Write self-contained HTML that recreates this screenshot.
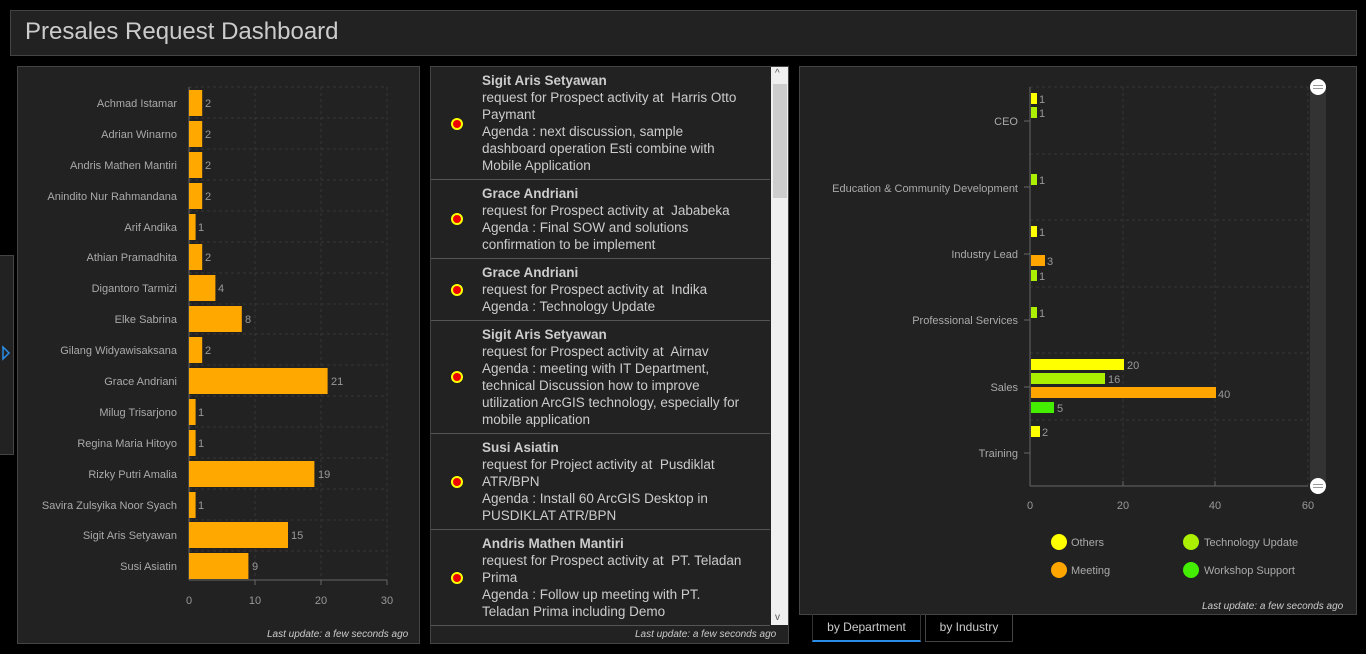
<!DOCTYPE html>
<html><head><meta charset="utf-8"><style>
*{margin:0;padding:0;box-sizing:border-box}
body{width:1366px;height:654px;background:#000;overflow:hidden;font-family:"Liberation Sans",sans-serif;position:relative;color:#bbb}
.abs{position:absolute}
.panel{position:absolute;background:#222;border:1px solid #444}
.upd{position:absolute;font-size:10px;font-style:italic;color:#ccc}
.item{position:absolute;left:1px;width:339px;border-bottom:1px solid #555}
.item .t{position:absolute;left:51px;top:5px;width:264px;font-size:13.5px;line-height:17px;color:#ccc}
.item .t b{color:#ccc}
.dot{position:absolute;left:20px;width:12px;height:12px;border-radius:50%;background:#e00;border:2px solid #ff0}
.tab{position:absolute;top:614px;height:28px;font-size:12px;color:#ccc;text-align:center;line-height:27px}
svg text{font-family:"Liberation Sans",sans-serif}
</style></head><body>
<div class="panel" style="left:10px;top:10px;width:1347px;height:46px"></div>
<div class="abs" style="left:25px;top:18px;font-size:24px;color:#ccc">Presales Request Dashboard</div>

<div class="panel" style="left:0;top:255px;width:14px;height:200px;border-left:none"></div>

<div class="panel" style="left:17px;top:66px;width:403px;height:578px"></div>
<div class="upd" style="left:267px;top:629px">Last update: a few seconds ago</div>

<div class="panel" style="left:430px;top:66px;width:359px;height:578px"></div>
<div class="abs" style="left:771px;top:67px;width:17px;height:558px;background:#f0f0f0"></div>
<div class="abs" style="left:773px;top:84px;width:14px;height:114px;background:#cdcdcd"></div>
<div class="abs" style="left:775px;top:68px;font-size:10px;color:#555">^</div>
<div class="abs" style="left:775px;top:612px;font-size:10px;color:#555">v</div>
<div class="upd" style="left:635px;top:629px">Last update: a few seconds ago</div>

<div class="abs" style="left:430px;top:66px;width:341px;height:560px;overflow:hidden">
 <div class="item" style="top:1px;height:113px"><div class="dot" style="top:51px"></div><div class="t"><b>Sigit Aris Setyawan</b><br>request for Prospect activity at&nbsp; Harris Otto Paymant<br>Agenda : next discussion, sample dashboard operation Esti combine with Mobile Application</div></div>
 <div class="item" style="top:114px;height:79px"><div class="dot" style="top:33px"></div><div class="t"><b>Grace Andriani</b><br>request for Prospect activity at&nbsp; Jababeka<br>Agenda : Final SOW and solutions confirmation to be implement</div></div>
 <div class="item" style="top:193px;height:62px"><div class="dot" style="top:25px"></div><div class="t"><b>Grace Andriani</b><br>request for Prospect activity at&nbsp; Indika<br>Agenda : Technology Update</div></div>
 <div class="item" style="top:255px;height:113px"><div class="dot" style="top:50px"></div><div class="t"><b>Sigit Aris Setyawan</b><br>request for Prospect activity at&nbsp; Airnav<br>Agenda : meeting with IT Department, technical Discussion how to improve utilization ArcGIS technology, especially for mobile application</div></div>
 <div class="item" style="top:368px;height:96px"><div class="dot" style="top:42px"></div><div class="t"><b>Susi Asiatin</b><br>request for Project activity at&nbsp; Pusdiklat ATR/BPN<br>Agenda : Install 60 ArcGIS Desktop in PUSDIKLAT ATR/BPN</div></div>
 <div class="item" style="top:464px;height:96px"><div class="dot" style="top:42px"></div><div class="t"><b>Andris Mathen Mantiri</b><br>request for Prospect activity at&nbsp; PT. Teladan Prima<br>Agenda : Follow up meeting with PT. Teladan Prima including Demo</div></div>
</div>

<div class="panel" style="left:799px;top:66px;width:558px;height:549px"></div>
<div class="upd" style="left:1202px;top:601px">Last update: a few seconds ago</div>

<div class="tab" style="left:812px;width:109px;border-bottom:2px solid #2a8ee8;border-left:1px solid #333;border-right:1px solid #333">by Department</div>
<div class="tab" style="left:925px;width:88px;border:1px solid #444;border-top:none">by Industry</div>

<svg class="abs" style="left:0;top:0" width="1366" height="654">
<path d="M3 347 L9 353 L3 359 Z" fill="none" stroke="#2a8ee8" stroke-width="1.5"/>
<g stroke="#353535" stroke-dasharray="3,3" stroke-width="1">
<line x1="255" y1="87" x2="255" y2="580"/><line x1="321" y1="87" x2="321" y2="580"/><line x1="387" y1="87" x2="387" y2="580"/>
<line x1="189" y1="87" x2="387" y2="87"/><line x1="189" y1="118" x2="387" y2="118"/><line x1="189" y1="149" x2="387" y2="149"/><line x1="189" y1="180" x2="387" y2="180"/><line x1="189" y1="211" x2="387" y2="211"/><line x1="189" y1="242" x2="387" y2="242"/><line x1="189" y1="273" x2="387" y2="273"/><line x1="189" y1="304" x2="387" y2="304"/><line x1="189" y1="334" x2="387" y2="334"/><line x1="189" y1="365" x2="387" y2="365"/><line x1="189" y1="396" x2="387" y2="396"/><line x1="189" y1="427" x2="387" y2="427"/><line x1="189" y1="458" x2="387" y2="458"/><line x1="189" y1="489" x2="387" y2="489"/><line x1="189" y1="520" x2="387" y2="520"/><line x1="189" y1="551" x2="387" y2="551"/>
</g>
<g stroke="#666"><line x1="189" y1="87" x2="189" y2="580"/><line x1="189" y1="580" x2="387" y2="580"/>
<line x1="255" y1="580" x2="255" y2="585"/><line x1="321" y1="580" x2="321" y2="585"/><line x1="387" y1="580" x2="387" y2="585"/></g>
<g fill="#999" font-size="11" text-anchor="middle"><text x="189" y="604">0</text><text x="255" y="604">10</text><text x="321" y="604">20</text><text x="387" y="604">30</text></g>
<g fill="#ffa800">
<rect x="189" y="90" width="13.2" height="26"/><rect x="189" y="121" width="13.2" height="26"/><rect x="189" y="152" width="13.2" height="26"/><rect x="189" y="183" width="13.2" height="26"/><rect x="189" y="214" width="6.6" height="26"/><rect x="189" y="244" width="13.2" height="26"/><rect x="189" y="275" width="26.4" height="26"/><rect x="189" y="306" width="52.8" height="26"/><rect x="189" y="337" width="13.2" height="26"/><rect x="189" y="368" width="138.6" height="26"/><rect x="189" y="399" width="6.6" height="26"/><rect x="189" y="430" width="6.6" height="26"/><rect x="189" y="461" width="125.4" height="26"/><rect x="189" y="492" width="6.6" height="26"/><rect x="189" y="522" width="99" height="26"/><rect x="189" y="553" width="59.4" height="26"/>
</g>
<g fill="#999" font-size="11">
<text x="205" y="107">2</text><text x="205" y="138">2</text><text x="205" y="169">2</text><text x="205" y="200">2</text><text x="198" y="231">1</text><text x="205" y="261">2</text><text x="218" y="292">4</text><text x="245" y="323">8</text><text x="205" y="354">2</text><text x="331" y="385">21</text><text x="198" y="416">1</text><text x="198" y="447">1</text><text x="318" y="478">19</text><text x="198" y="509">1</text><text x="291" y="539">15</text><text x="252" y="570">9</text>
</g>
<g fill="#aaa" font-size="11" text-anchor="end">
<text x="177" y="107">Achmad Istamar</text><text x="177" y="138">Adrian Winarno</text><text x="177" y="169">Andris Mathen Mantiri</text><text x="177" y="200">Anindito Nur Rahmandana</text><text x="177" y="231">Arif Andika</text><text x="177" y="261">Athian Pramadhita</text><text x="177" y="292">Digantoro Tarmizi</text><text x="177" y="323">Elke Sabrina</text><text x="177" y="354">Gilang Widyawisaksana</text><text x="177" y="385">Grace Andriani</text><text x="177" y="416">Milug Trisarjono</text><text x="177" y="447">Regina Maria Hitoyo</text><text x="177" y="478">Rizky Putri Amalia</text><text x="177" y="509">Savira Zulsyika Noor Syach</text><text x="177" y="539">Sigit Aris Setyawan</text><text x="177" y="570">Susi Asiatin</text>
</g>

<rect x="1310" y="87" width="16" height="399" fill="#333"/>
<g stroke="#353535" stroke-dasharray="3,3">
<line x1="1030" y1="87" x2="1308" y2="87"/><line x1="1030" y1="154" x2="1308" y2="154"/><line x1="1030" y1="220" x2="1308" y2="220"/><line x1="1030" y1="287" x2="1308" y2="287"/><line x1="1030" y1="353" x2="1308" y2="353"/><line x1="1030" y1="420" x2="1308" y2="420"/>
<line x1="1123" y1="87" x2="1123" y2="486"/><line x1="1215" y1="87" x2="1215" y2="486"/><line x1="1308" y1="87" x2="1308" y2="486"/>
</g>
<g stroke="#666"><line x1="1030" y1="87" x2="1030" y2="486"/><line x1="1030" y1="486" x2="1308" y2="486"/>
<line x1="1123" y1="481" x2="1123" y2="486"/><line x1="1215" y1="481" x2="1215" y2="486"/>
<line x1="1024" y1="121" x2="1030" y2="121"/><line x1="1024" y1="187" x2="1030" y2="187"/><line x1="1024" y1="254" x2="1030" y2="254"/><line x1="1024" y1="320" x2="1030" y2="320"/><line x1="1024" y1="387" x2="1030" y2="387"/><line x1="1024" y1="453" x2="1030" y2="453"/></g>
<g fill="#999" font-size="11" text-anchor="middle"><text x="1030" y="509">0</text><text x="1123" y="509">20</text><text x="1215" y="509">40</text><text x="1308" y="509">60</text></g>
<g fill="#aaa" font-size="11" text-anchor="end">
<text x="1018" y="125">CEO</text><text x="1018" y="192">Education &amp; Community Development</text><text x="1018" y="258">Industry Lead</text><text x="1018" y="324">Professional Services</text><text x="1018" y="391">Sales</text><text x="1018" y="457">Training</text>
</g>
<rect x="1031" y="93" width="6" height="11" fill="#ffff00"/><rect x="1031" y="107" width="6" height="11" fill="#aaf000"/>
<rect x="1031" y="174" width="6" height="11" fill="#aaf000"/>
<rect x="1031" y="226" width="6" height="11" fill="#ffff00"/><rect x="1031" y="255" width="14" height="11" fill="#ffa500"/><rect x="1031" y="270" width="6" height="11" fill="#aaf000"/>
<rect x="1031" y="307" width="6" height="11" fill="#aaf000"/>
<rect x="1031" y="359" width="93" height="11" fill="#ffff00"/><rect x="1031" y="373" width="74" height="11" fill="#aaf000"/><rect x="1031" y="387" width="185" height="11" fill="#ffa500"/><rect x="1031" y="402" width="23" height="11" fill="#44ee00"/>
<rect x="1031" y="426" width="9" height="11" fill="#ffff00"/>
<g fill="#999" font-size="11">
<text x="1039" y="103">1</text><text x="1039" y="117">1</text><text x="1039" y="184">1</text><text x="1039" y="236">1</text><text x="1047" y="265">3</text><text x="1039" y="280">1</text><text x="1039" y="317">1</text><text x="1127" y="369">20</text><text x="1108" y="383">16</text><text x="1218" y="398">40</text><text x="1057" y="412">5</text><text x="1042" y="436">2</text>
</g>
<g><circle cx="1318" cy="87" r="8" fill="#fff"/><line x1="1313" y1="85.5" x2="1323" y2="85.5" stroke="#999"/><line x1="1313" y1="88.5" x2="1323" y2="88.5" stroke="#999"/>
<circle cx="1318" cy="486" r="8" fill="#fff"/><line x1="1313" y1="484.5" x2="1323" y2="484.5" stroke="#999"/><line x1="1313" y1="487.5" x2="1323" y2="487.5" stroke="#999"/></g>
<circle cx="1059" cy="542" r="8" fill="#ffff00"/><circle cx="1191" cy="542" r="8" fill="#aaf000"/><circle cx="1059" cy="570" r="8" fill="#ffa500"/><circle cx="1191" cy="570" r="8" fill="#44ee00"/>
<g fill="#aaa" font-size="11"><text x="1071" y="546">Others</text><text x="1204" y="546">Technology Update</text><text x="1071" y="574">Meeting</text><text x="1204" y="574">Workshop Support</text></g>
</svg>
</body></html>
